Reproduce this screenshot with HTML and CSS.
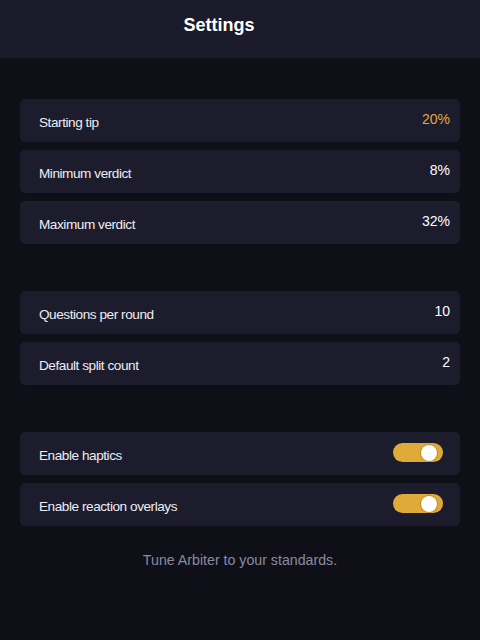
FILE: index.html
```html
<!DOCTYPE html>
<html lang="en">
<head>
<meta charset="utf-8">
<title>Settings</title>
<link rel="stylesheet" href="styles.css">
</head>
<body>
<header class="topbar">
  <h1 class="title">Settings</h1>
</header>
<main class="content">
  <section class="group">
    <div class="row"><span class="label">Starting tip</span><span class="value accent">20%</span></div>
    <div class="row"><span class="label">Minimum verdict</span><span class="value">8%</span></div>
    <div class="row"><span class="label">Maximum verdict</span><span class="value">32%</span></div>
  </section>
  <section class="group">
    <div class="row"><span class="label">Questions per round</span><span class="value">10</span></div>
    <div class="row"><span class="label">Default split count</span><span class="value">2</span></div>
  </section>
  <section class="group">
    <div class="row"><span class="label">Enable haptics</span><span class="toggle on"><span class="knob"></span></span></div>
    <div class="row"><span class="label">Enable reaction overlays</span><span class="toggle on"><span class="knob"></span></span></div>
  </section>
  <p class="footnote">Tune Arbiter to your standards.</p>
</main>
</body>
</html>
```

FILE: styles.css
```css
* { box-sizing: border-box; }
html, body {
  margin: 0;
  padding: 0;
  background: #0f0f18;
  font-family: "Liberation Sans", Arial, sans-serif;
  color: #f2f2f6;
  width: 480px;
  height: 640px;
  overflow: hidden;
}
.topbar {
  height: 58px;
  background: #1c1b2b;
  display: flex;
  align-items: center;
  justify-content: center;
  padding-right: 42px;
}
.title {
  margin: 0;
  font-size: 18px;
  font-weight: 700;
  color: #ffffff;
  position: relative;
  top: -4px;
}
.content {
  padding: 41px 20px 0;
  display: flex;
  flex-direction: column;
  gap: 47px;
}
.group {
  display: flex;
  flex-direction: column;
  gap: 8px;
}
.row {
  height: 43px;
  background: #1d1c2c;
  border-radius: 5px;
  display: flex;
  align-items: center;
  justify-content: space-between;
  padding: 0 10px 0 19px;
}
.label {
  font-size: 13.6px;
  letter-spacing: -0.45px;
  color: #ededf3;
  padding-top: 3px;
}
.value {
  font-size: 14px;
  color: #ffffff;
  padding-bottom: 4px;
}
.value.accent { color: #e1aa3c; }
.toggle {
  width: 50px;
  height: 19px;
  border-radius: 10px;
  background: #e0aa3a;
  display: flex;
  align-items: center;
  justify-content: flex-end;
  padding-right: 6px;
  margin-right: 7px;
  margin-top: -2px;
}
.knob {
  width: 16px;
  height: 16px;
  border-radius: 50%;
  background: #ffffff;
  box-shadow: 0 0 0 1px rgba(120, 80, 10, 0.35);
}
.footnote {
  margin: -21px 0 0;
  text-align: center;
  font-size: 14.2px;
  color: #8a8aa2;
}
```
